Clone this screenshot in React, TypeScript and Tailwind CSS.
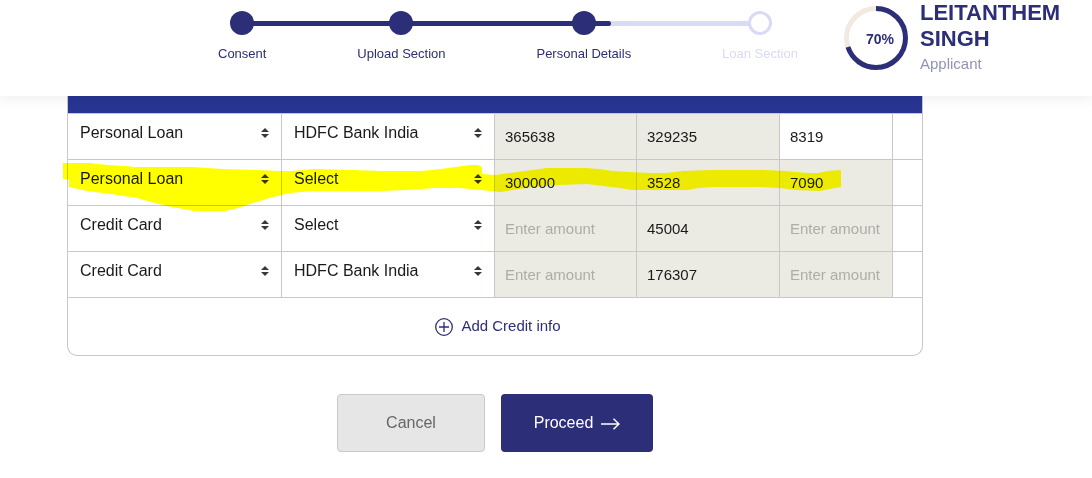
import React from "react";

type Step = { label: string; done: boolean };

type Amount = { value?: string; editable?: boolean };

type Credit = {
  type: string;
  bank: string;
  amounts: Amount[];
};

const steps: Step[] = [
  { label: "Consent", done: true },
  { label: "Upload Section", done: true },
  { label: "Personal Details", done: true },
  { label: "Loan Section", done: false },
];

const credits: Credit[] = [
  {
    type: "Personal Loan",
    bank: "HDFC Bank India",
    amounts: [{ value: "365638" }, { value: "329235" }, { value: "8319", editable: true }],
  },
  {
    type: "Personal Loan",
    bank: "Select",
    amounts: [{ value: "300000" }, { value: "3528" }, { value: "7090" }],
  },
  {
    type: "Credit Card",
    bank: "Select",
    amounts: [{}, { value: "45004" }, {}],
  },
  {
    type: "Credit Card",
    bank: "HDFC Bank India",
    amounts: [{}, { value: "176307" }, {}],
  },
];

const creditTypes = ["Personal Loan", "Credit Card"];
const banks = ["Select", "HDFC Bank India"];
const amountNames = ["Loan amount", "Outstanding amount", "Monthly instalment"];

function Stepper() {
  return (
    <div className="relative mt-[11px] w-[580px] shrink-0">
      <div className="absolute top-[10px] right-9 left-6 h-[5px] rounded-full bg-[#d9daf6]">
        <div className="h-full w-[71%] rounded-full bg-[#2c2e78]" />
      </div>
      <ol className="relative flex justify-between">
        {steps.map((step) => (
          <li key={step.label} className="flex flex-col items-center gap-2">
            <span
              className={
                step.done
                  ? "size-6 rounded-full bg-[#2c2e78]"
                  : "size-6 rounded-full border-3 border-[#d9daf6] bg-white"
              }
            />
            <span
              className={
                step.done
                  ? "text-[13px] leading-[22px] text-[#2c2e78]"
                  : "text-[13px] leading-[22px] text-[#d9daf6]"
              }
            >
              {step.label}
            </span>
          </li>
        ))}
      </ol>
    </div>
  );
}

function Profile() {
  return (
    <div className="flex items-start gap-3">
      <div className="mt-[6px] grid size-16 shrink-0 place-items-center">
        <svg viewBox="0 0 64 64" className="col-start-1 row-start-1 size-16" fill="none" strokeWidth="5">
          <circle cx="32" cy="32" r="29.5" stroke="#f2e9e0" />
          <circle
            cx="32"
            cy="32"
            r="29.5"
            stroke="#2c2e78"
            pathLength="100"
            strokeDasharray="70 30"
            transform="rotate(-90 32 32)"
          />
        </svg>
        <span className="col-start-1 row-start-1 pt-[2px] pl-2 text-[14px] leading-4 font-bold text-[#2c2e78]">
          70%
        </span>
      </div>
      <div>
        <h1 className="text-[22px] leading-[26px] font-bold text-[#2c2e78]">
          LEITANTHEM
          <br />
          SINGH
        </h1>
        <p className="text-[15px] leading-6 text-[#9194b3]">Applicant</p>
      </div>
    </div>
  );
}

function Picker({ label, value, options }: { label: string; value: string; options: string[] }) {
  return (
    <div className="relative">
      <select
        aria-label={label}
        defaultValue={value}
        className="block h-[45px] w-full appearance-none bg-transparent pr-8 pb-2 pl-3 text-base text-[#1a1a1a] outline-none"
      >
        {options.map((option) => (
          <option key={option}>{option}</option>
        ))}
      </select>
      <svg
        viewBox="0 0 8 10"
        className="pointer-events-none absolute top-[14px] right-3 h-[10px] w-2"
        fill="#343a40"
      >
        <path d="M4 0 0 4h8zM4 10 0 6h8z" />
      </svg>
    </div>
  );
}

function Highlight() {
  return (
    <svg
      viewBox="0 0 778 48"
      className="pointer-events-none absolute top-[67px] left-[-5px] h-12 w-[778px] mix-blend-multiply"
      fill="#ffff00"
    >
      <path d="M0 0H27L35 1L45 2L62 3L71 4H130L144 5L160 6L195 7L215 8L229 8L250 6L290 7L318 8H358L378 6L400 3L407 2H415L419 4V11L432 12L447 10L462 8L484 5H523L536 6L550 8L566 9L587 10H603L620 8L648 7H700L722 8L745 10H755L765 8L778 7V24L766 26L757 28L733 27L716 25L698 24H650L635 25L625 27H570L556 25L540 23L524 21L496 22L470 24L450 27L437 29L418 27L396 25H372L344 27L317 28H270L250 28L227 30L210 34L190 40L175 45L162 48H131L120 46L104 43L88 39L74 35L48 31L24 28L6 24V16H0Z" />
    </svg>
  );
}

function CreditTable() {
  return (
    <section className="relative rounded-b-[10px] border border-t-0 border-[#c8c8c8]">
      <table className="w-full table-fixed border-separate border-spacing-0">
        <colgroup>
          <col className="w-[25.06%]" />
          <col className="w-[24.94%]" />
          <col className="w-[16.63%]" />
          <col className="w-[16.74%]" />
          <col className="w-[13.23%]" />
          <col />
        </colgroup>
        <thead>
          <tr>
            <th colSpan={6} aria-label="Credit info" className="h-[17px] bg-[#283593] p-0" />
          </tr>
        </thead>
        <tbody>
          {credits.map((credit, row) => (
            <tr key={row}>
              <td className="border-t border-r border-[#c8c8c8] p-0">
                <Picker label="Credit type" value={credit.type} options={creditTypes} />
              </td>
              <td className="border-t border-r border-[#c8c8c8] p-0">
                <Picker label="Bank" value={credit.bank} options={banks} />
              </td>
              {credit.amounts.map((amount, column) => (
                <td key={column} className="border-t border-r border-[#c8c8c8] p-0">
                  <input
                    type="text"
                    aria-label={amountNames[column]}
                    placeholder="Enter amount"
                    defaultValue={amount.value}
                    readOnly={!amount.editable}
                    className="block h-[45px] w-full bg-white px-[10px] text-[15px] text-[#1a1a1a] outline-none placeholder:text-[#adada8] read-only:bg-[#ebeae3]"
                  />
                </td>
              ))}
              <td className="border-t border-[#c8c8c8] p-0" />
            </tr>
          ))}
        </tbody>
      </table>
      <div className="flex h-[58px] justify-center border-t border-[#c8c8c8]">
        <button type="button" className="flex items-center gap-2 pl-[6px] text-[15px] text-[#2c2e78]">
          <svg viewBox="0 0 18 18" className="size-[18px]" fill="none" stroke="currentColor" strokeWidth="1.3">
            <circle cx="9" cy="9" r="8.3" />
            <path d="M9 4v10M4 9h10" />
          </svg>
          Add Credit info
        </button>
      </div>
      <Highlight />
    </section>
  );
}

export default function App() {
  return (
    <div className="min-h-screen bg-white font-['Liberation_Sans',Arial,sans-serif]">
      <header className="relative z-10 flex items-start gap-[46px] bg-white pb-5 pl-[218px] shadow-[0_2px_14px_rgba(0,0,0,0.08)]">
        <Stepper />
        <Profile />
      </header>
      <main className="max-w-[990px] px-[67px] pb-6">
        <CreditTable />
        <div className="mt-[38px] flex justify-center gap-4">
          <button
            type="button"
            className="h-[58px] w-[148px] rounded border border-[#c8c8c8] bg-[#e6e6e6] text-base text-[#666666]"
          >
            Cancel
          </button>
          <button
            type="button"
            className="flex h-[58px] w-[152px] items-center justify-center gap-2 rounded bg-[#2c2e78] text-base text-white"
          >
            Proceed
            <svg viewBox="0 0 19 12" className="mt-[2px] h-3 w-[19px]" fill="none" stroke="currentColor" strokeWidth="1.5">
              <path d="M0 6h18M12.500 .7 18 6l-5.500 5.300" />
            </svg>
          </button>
        </div>
      </main>
    </div>
  );
}
